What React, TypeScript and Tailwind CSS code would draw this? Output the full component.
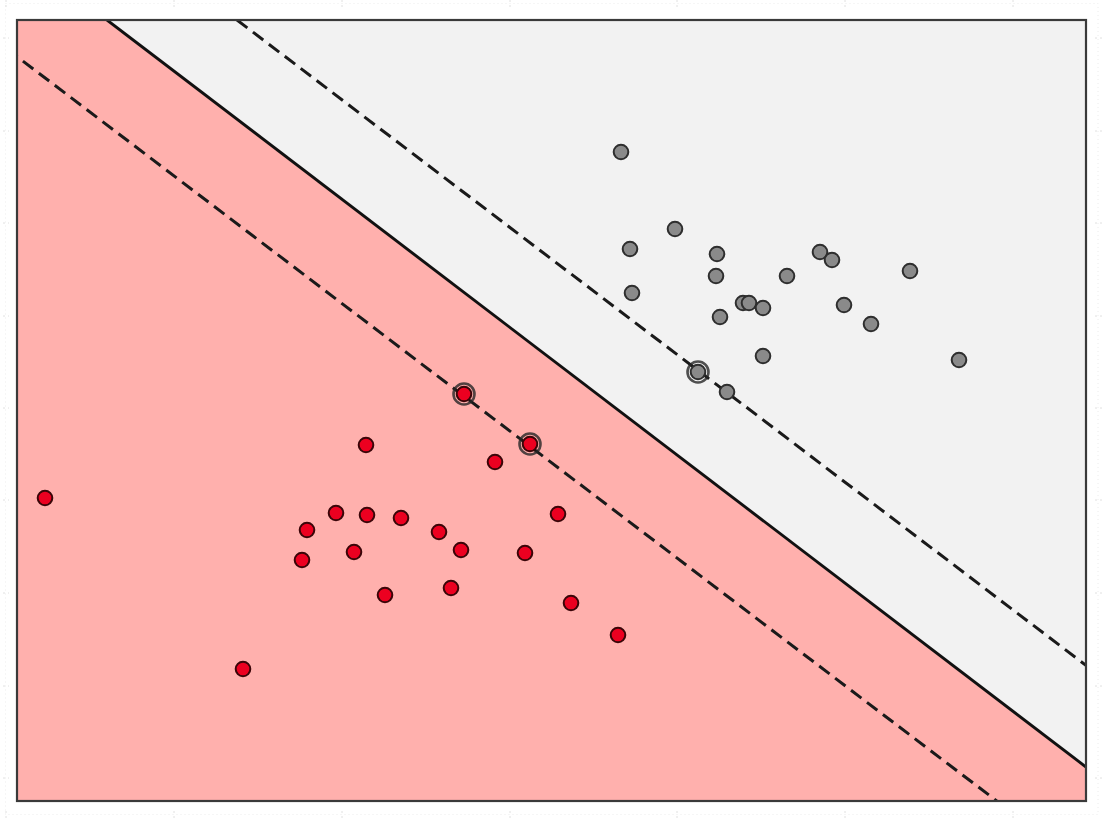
import React from 'react';

type Pt = [number, number];

// plot frame
const X0 = 17;
const Y0 = 20;
const X1 = 1086;
const Y1 = 801;

const grayPoints: Pt[] = [
  [621, 152], [675, 229], [630, 249], [717, 254], [820, 252], [832, 260],
  [716, 276], [787, 276], [910, 271], [632, 293], [743, 303], [749, 303],
  [763, 308], [844, 305], [720, 317], [871, 324], [763, 356], [959, 360],
  [698, 372], [727, 392],
];

const redPoints: Pt[] = [
  [464, 394], [530, 444], [366, 445], [495, 462], [45, 498], [336, 513],
  [367, 515], [401, 518], [558, 514], [307, 530], [439, 532], [461, 550],
  [354, 552], [302, 560], [525, 553], [385, 595], [451, 588], [571, 603],
  [618, 635], [243, 669],
];

const supportVectors: Pt[] = [[464, 394], [530, 444], [698, 372]];

const xTicks = [6, 174, 342, 510, 677, 845, 1013];
const yTicks = [38, 131, 223, 316, 408, 500, 593, 686, 778];

const Dot: React.FC<{ p: Pt; fill: string; edge: string }> = ({ p, fill, edge }) => (
  <circle cx={p[0]} cy={p[1]} r={7.3} fill={fill} stroke={edge} strokeWidth={2} />
);

const SvmPlot: React.FC = () => {
  return (
    <svg viewBox="0 0 1106 820" className="block w-full h-full">
      <defs>
        <clipPath id="frame">
          <rect x={X0} y={Y0} width={X1 - X0} height={Y1 - Y0} />
        </clipPath>
      </defs>

      {/* faint outer guide box with ticks */}
      <rect x={5.5} y={3.5} width={1092.5} height={811} fill="none" stroke="#ececec" strokeWidth={1} strokeDasharray="1 3" />
      {xTicks.map((x) => (
        <g key={`xt${x}`} stroke="#e0e0e0" strokeWidth={1}>
          <line x1={x} y1={0} x2={x} y2={8} strokeDasharray="2 3" />
          <line x1={x} y1={811} x2={x} y2={820} strokeDasharray="2 3" />
        </g>
      ))}
      {yTicks.map((y) => (
        <g key={`yt${y}`} stroke="#e0e0e0" strokeWidth={1}>
          <line x1={3} y1={y} x2={9} y2={y} strokeDasharray="2 3" />
          <line x1={1095} y1={y} x2={1102} y2={y} strokeDasharray="2 3" />
        </g>
      ))}

      <g clipPath="url(#frame)">
        {/* decision regions */}
        <polygon points={`${X0},${Y0} 107,${Y0} ${X1},767 ${X1},${Y1} ${X0},${Y1}`} fill="#ffb0ad" />
        <polygon points={`107,${Y0} ${X1},${Y0} ${X1},767`} fill="#f2f2f2" />

        {/* margins and boundary */}
        <line x1={107} y1={Y0} x2={X1} y2={767} stroke="#111" strokeWidth={2.9} />
        <line x1={237} y1={Y0} x2={X1 + 10} y2={673} stroke="#1a1a1a" strokeWidth={3} strokeDasharray="13 7" />
        <line x1={X0 - 10} y1={49} x2={1010} y2={811} stroke="#1a1a1a" strokeWidth={3} strokeDasharray="13 7" />

        {grayPoints.map((p, i) => (
          <Dot key={`g${i}`} p={p} fill="#8a8a8a" edge="#2e2e2e" />
        ))}
        {redPoints.map((p, i) => (
          <Dot key={`r${i}`} p={p} fill="#ec0020" edge="#3a0508" />
        ))}
        {supportVectors.map((p, i) => (
          <circle key={`sv${i}`} cx={p[0]} cy={p[1]} r={10.5} fill="none" stroke="#262626" strokeWidth={2.6} opacity={0.8} />
        ))}
      </g>

      <rect x={X0} y={Y0} width={X1 - X0} height={Y1 - Y0} fill="none" stroke="#3a3a3a" strokeWidth={2.2} />
    </svg>
  );
};

const App: React.FC = () => {
  return (
    <div className="w-[1106px] h-[820px] bg-white overflow-hidden">
      <SvmPlot />
    </div>
  );
};

export default App;
